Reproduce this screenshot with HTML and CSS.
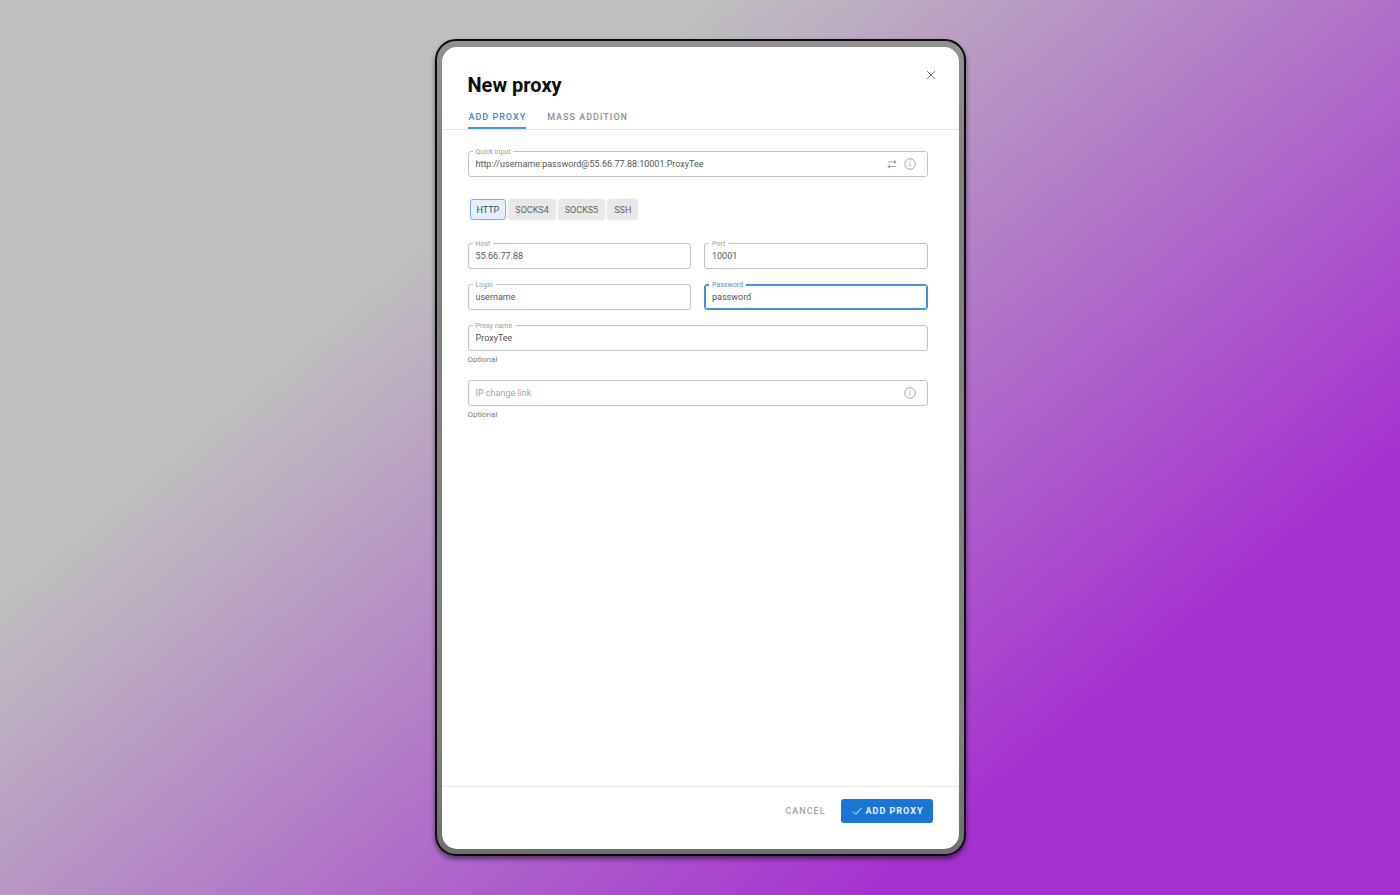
FILE: index.html
```html
<!DOCTYPE html>
<html lang="en">
<head>
<meta charset="utf-8">
<meta name="viewport" content="width=device-width, initial-scale=1">
<title>New proxy</title>
<link rel="stylesheet" href="styles.css">
</head>
<body>
<div class="frame">
<main class="dialog">
  <header class="header">
    <div class="title-row">
      <h1 class="title">New proxy</h1>
      <button class="close" type="button" aria-label="Close">
        <svg viewBox="0 0 10 10" width="10" height="10"><path d="M1.200 1.200l7.600 7.600M8.800 1.200L1.200 8.800"/></svg>
      </button>
    </div>
    <nav class="tabs">
      <button class="tab tab-active" type="button">ADD PROXY</button>
      <button class="tab" type="button">MASS ADDITION</button>
    </nav>
  </header>
  <form class="form" id="proxy-form">
    <div class="field">
      <label class="label" for="quick">Quick input</label>
      <input class="input" id="quick" type="text" value="http://username:password@55.66.77.88:10001:ProxyTee">
      <button class="icon-button" type="button" aria-label="Convert">
        <svg viewBox="0 0 12 12" width="12" height="12"><path d="M2 4h8M2 8.500h8"/><path class="solid" d="M8 1.800L10.800 4L8 6.200zM4 6.300L1.200 8.500L4 10.700z"/></svg>
      </button>
      <button class="icon-button" type="button" aria-label="Quick input help">
        <svg viewBox="0 0 12 12" width="12" height="12"><circle cx="6" cy="6" r="5.300"/><path d="M6 5.300v3.400M6 3.200v1.100"/></svg>
      </button>
    </div>
    <div class="types" role="group" aria-label="Proxy type">
      <button class="type type-active" type="button" aria-pressed="true">HTTP</button>
      <button class="type" type="button" aria-pressed="false">SOCKS4</button>
      <button class="type" type="button" aria-pressed="false">SOCKS5</button>
      <button class="type" type="button" aria-pressed="false">SSH</button>
    </div>
    <div class="grid">
      <div class="field">
        <label class="label" for="host">Host</label>
        <input class="input" id="host" type="text" value="55.66.77.88">
      </div>
      <div class="field">
        <label class="label" for="port">Port</label>
        <input class="input" id="port" type="text" value="10001">
      </div>
      <div class="field">
        <label class="label" for="login">Login</label>
        <input class="input" id="login" type="text" value="username">
      </div>
      <div class="field field-active">
        <label class="label" for="password">Password</label>
        <input class="input" id="password" type="text" value="password">
      </div>
      <div class="field wide">
        <label class="label" for="name">Proxy name</label>
        <input class="input" id="name" type="text" value="ProxyTee">
      </div>
    </div>
    <p class="hint">Optional</p>
    <div class="field">
      <input class="input" type="text" placeholder="IP change link" aria-label="IP change link">
      <button class="icon-button" type="button" aria-label="IP change link help">
        <svg viewBox="0 0 12 12" width="12" height="12"><circle cx="6" cy="6" r="5.300"/><path d="M6 5.300v3.400M6 3.200v1.100"/></svg>
      </button>
    </div>
    <p class="hint">Optional</p>
  </form>
  <footer class="footer">
    <button class="cancel" type="button">CANCEL</button>
    <button class="submit" type="submit" form="proxy-form">
      <svg viewBox="0 0 10 10" width="10" height="10"><path d="M1 5.500l2.700 2.700L9.300 2"/></svg>
      ADD PROXY
    </button>
  </footer>
</main>
</div>
</body>
</html>
```
FILE: styles.css
```css
* {
  box-sizing: border-box;
}

body {
  margin: 0;
  min-height: 100vh;
  padding: 39px 16px;
  display: flex;
  justify-content: center;
  font-family: Roboto, "Liberation Sans", sans-serif;
  font-size: 9px;
  color: #555;
  background: linear-gradient(140deg, #bfbfbf 29%, #a531d0 79%);
}

button,
input {
  font: inherit;
  color: inherit;
  margin: 0;
  padding: 0;
  border: 0;
  background: none;
}

svg {
  display: block;
  fill: none;
  stroke: currentColor;
  stroke-width: 1;
}

.solid {
  fill: currentColor;
  stroke: none;
}

.frame {
  display: flex;
  width: 100%;
  max-width: 531px;
  padding: 6px 5px 5px;
  border: 2px solid #0c0a0d;
  border-radius: 21px;
  background: linear-gradient(#929292, #808280 15%, #808080 85%, #6f6f6f);
  box-shadow: 0 3px 5px rgba(0, 0, 0, 0.5);
}

.dialog {
  flex: 1;
  min-width: 0;
  display: flex;
  flex-direction: column;
  background: #fff;
  border-radius: 15px;
}

.header {
  padding: 23px 23px 0 26px;
  border-bottom: 1px solid #e8e8e8;
}

.title-row {
  display: flex;
  justify-content: space-between;
  align-items: flex-start;
}

.title {
  margin: 0;
  padding-top: 3px;
  font-size: 20px;
  line-height: 24px;
  font-weight: 700;
  color: #0c0c0c;
}

.close {
  color: #777;
}

.tabs {
  display: flex;
  gap: 20px;
  padding-top: 8px;
}

.tab {
  height: 24px;
  padding: 1px 0 0 1px;
  font-weight: 500;
  letter-spacing: 1px;
  color: #8e8e8e;
  border-bottom: 2px solid transparent;
}

.tab-active {
  color: #3a88dc;
  border-color: #4a94e0;
}

.form {
  flex: 1;
  padding: 21px 31px 21px 26px;
}

.field {
  position: relative;
  display: flex;
  align-items: center;
  gap: 6px;
  height: 26px;
  padding-right: 11px;
  border: 1px solid #c2c2c2;
  border-radius: 3px;
}

.field-active {
  border-color: #428fe0;
  box-shadow: inset 0 0 0 1px #428fe0;
}

.label {
  position: absolute;
  top: -4px;
  left: 4px;
  padding: 0 3px;
  font-size: 7px;
  line-height: 8px;
  color: #9a9a9a;
  background: #fff;
}

.field-active .label {
  color: #428fe0;
}

.input {
  flex: 1;
  min-width: 0;
  height: 24px;
  padding: 0 0 1px 7px;
  outline: 0;
}

.input::placeholder {
  color: #a2a2a2;
  opacity: 1;
}

.icon-button {
  color: #a6a6a6;
}

.types {
  display: flex;
  gap: 2px;
  padding: 22px 2px 23px;
}

.type {
  height: 21px;
  padding: 0 6px;
  border: 1px solid #e8e8e8;
  border-radius: 3px;
  color: #666;
  background: #e8e8e8;
  box-shadow: 0 0 3px #eee;
}

.type-active {
  color: #3e4952;
  background: #e3f0fb;
  border-color: #77b0ec;
}

.grid {
  display: grid;
  grid-template-columns: 1fr 1fr;
  gap: 15px 13px;
}

.wide {
  grid-column: 1 / -1;
}

.hint {
  margin: 0;
  padding: 3px 0 15px;
  font-size: 8px;
  line-height: 11px;
  color: #7c7c7c;
}

.footer {
  display: flex;
  justify-content: flex-end;
  align-items: center;
  gap: 15px;
  padding: 12px 26px 26px;
  border-top: 1px solid #ebebeb;
}

.cancel,
.submit {
  height: 24px;
  letter-spacing: 1px;
}

.cancel {
  font-weight: 500;
  color: #a2a2a2;
}

.submit {
  display: flex;
  align-items: center;
  gap: 4px;
  padding: 0 9px 0 11px;
  border-radius: 3px;
  font-weight: 700;
  color: #e9f2fb;
  background: #1976d5;
}
```
